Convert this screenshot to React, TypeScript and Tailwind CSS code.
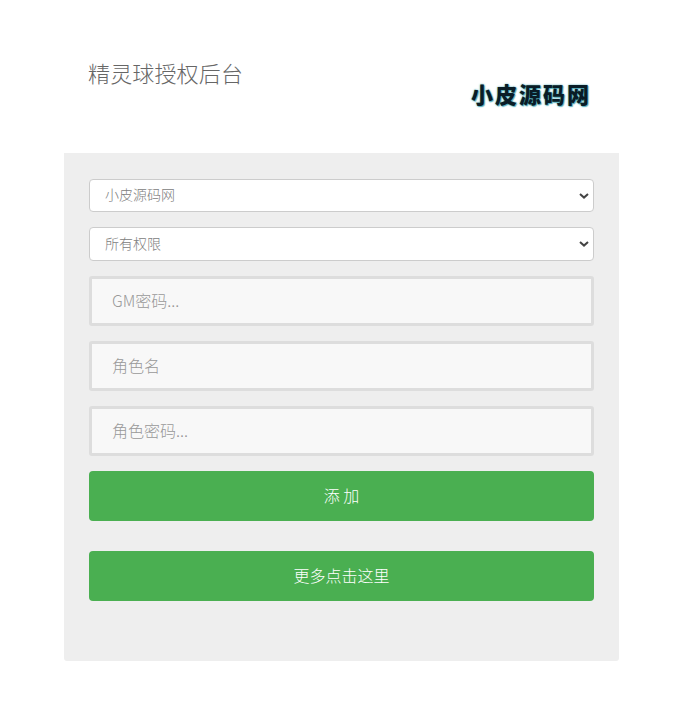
function Picker({ label, className }: { label: string; className: string }) {
  return (
    <div className="relative w-full">
      <select className={`${className} w-full appearance-none rounded-[4px] border border-[#ccc] bg-white pl-[15px] text-[14px] font-light text-[#808080]`}>
        <option>{label}</option>
      </select>
      <svg className="absolute right-[5px] top-1/2 -mt-[3px] pointer-events-none" width="10" height="6" viewBox="0 0 10 6" fill="none">
        <path d="M1 1l4 3.6L9 1" stroke="#444" strokeWidth="2" />
      </svg>
    </div>
  );
}

export default function App() {
  const font = "font-['Noto_Sans_CJK_SC','Liberation_Sans',sans-serif]";
  const field = "h-[50px] w-full rounded-[3px] border-[3px] border-[#dddddd] bg-[#f8f8f8] pl-5 pr-5 pb-[2px] text-[16px] font-light placeholder:text-[#999]";
  const action = "h-[50px] w-full rounded-[4px] bg-[#4aaf51] pb-[2px] text-[16px] font-light text-white";
  return (
    <div className={`w-[693px] h-[718px] bg-white overflow-hidden ${font}`}>
      <div className="w-[555px] ml-16 pt-[58px]">
        <div className="h-[95px] flex items-start justify-between pl-6 pr-[28px]">
          <h1 className="text-[22px] leading-[28px] tracking-[0.15px] font-light text-[#666]">精灵球授权后台</h1>
          <div className="mt-[21px] text-[22px] leading-[28px] font-black tracking-[2px] text-[#0a1c26] [text-shadow:0_0_2px_#3f9fb0,1px_1px_1px_#5fb6c4]">小皮源码网</div>
        </div>
        <div className="h-[508px] bg-[#eeeeee] rounded-b-[3px] px-[25px] pt-[26px] flex flex-col">
          <Picker label="小皮源码网" className="h-[33px] pb-[2px]" />
          <div className="mt-[15px]">
            <Picker label="所有权限" className="h-[34px] pb-[1px]" />
          </div>
          <div className="mt-[15px] flex flex-col gap-[15px]">
            <input placeholder="GM密码..." className={field} />
            <input placeholder="角色名" className={field} />
            <input placeholder="角色密码..." className={field} />
            <button className={action}>添 加</button>
          </div>
          <button className={`mt-[30px] ${action}`}>更多点击这里</button>
        </div>
      </div>
    </div>
  );
}
